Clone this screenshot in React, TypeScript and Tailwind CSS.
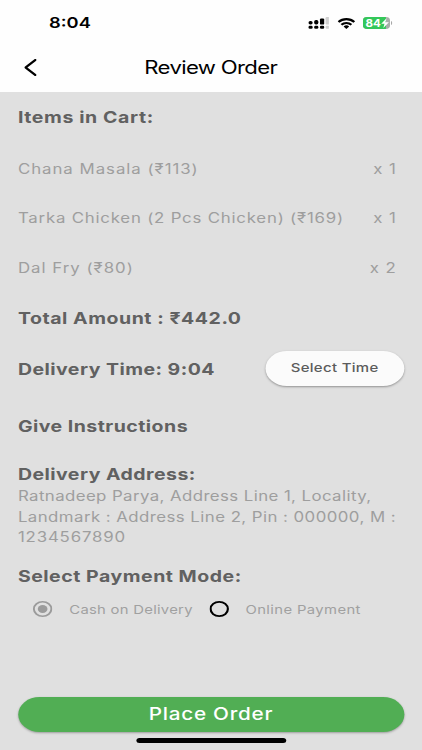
import type { ReactNode } from "react";

const items = [
  { name: "Chana Masala (₹113)", qty: "x 1", tracking: "tracking-[0.8px]" },
  { name: "Tarka Chicken (2 Pcs Chicken) (₹169)", qty: "x 1", tracking: "tracking-[0.65px]" },
  { name: "Dal Fry (₹80)", qty: "x 2", tracking: "tracking-[0.82px]" },
];

function Heading({ children, tracking = "tracking-[0.39px]" }: { children: ReactNode; tracking?: string }) {
  return (
    <h2 className={`whitespace-nowrap text-[16px] leading-[20px] font-bold text-[#616161] ${tracking}`}>
      {children}
    </h2>
  );
}

function StatusBar() {
  return (
    <div className="flex h-[46px] items-center pl-[40.3px] pr-[24.7px]">
      <span className="flex-1 text-[15px] leading-[20px] font-semibold text-black">8:04</span>
      <svg className="mr-[6.7px] h-[12px] w-[17.7px]" viewBox="0 0 21.5 12" preserveAspectRatio="none">
        <g fill="#000">
          <rect x="0.3" y="4" width="4.2" height="3.6" rx="1.8" />
          <rect x="6" y="3" width="4.2" height="4.6" rx="1.8" />
          <rect x="11.8" y="1.4" width="4.2" height="6.2" rx="1.2" />
          <rect x="0.3" y="8.8" width="4.2" height="3" rx="1.4" />
          <rect x="6" y="8.8" width="4.2" height="3" rx="1.4" />
          <rect x="11.8" y="8.8" width="4.2" height="3" rx="1.2" />
        </g>
        <g fill="#cfcfcf">
          <rect x="17.4" y="0" width="4" height="7.6" rx="1.2" />
          <rect x="17.4" y="8.8" width="4" height="3" rx="1.2" />
        </g>
      </svg>
      <svg className="mr-[6.6px] h-[11px] w-[14.8px]" viewBox="0 0 18 12" preserveAspectRatio="none">
        <path d="M1.1 4.4a11.4 11.4 0 0 1 15.8 0M4 7.4a7.2 7.2 0 0 1 10 0" fill="none" stroke="#000" strokeWidth="2.3" />
        <path d="M9 12 6.2 9.2a4 4 0 0 1 5.6 0z" fill="#000" />
      </svg>
      <svg className="h-[12px] w-[24px]" viewBox="0 0 24 12">
        <defs>
          <clipPath id="battery">
            <rect width="22.2" height="12" rx="3.4" />
          </clipPath>
        </defs>
        <g clipPath="url(#battery)">
          <rect width="22.2" height="12" fill="#a9aeaa" />
          <rect width="18.8" height="12" fill="#34c759" />
        </g>
        <path d="M23 4v4c1-.5 1.2-1.2 1.2-2s-.2-1.5-1.2-2z" fill="#a8a8a8" />
        <text x="2" y="9.8" fontSize="10.4" fontWeight="700" fill="#fff" textLength="12.6" lengthAdjust="spacingAndGlyphs">84</text>
        <path d="M19.4 1.3l-4.400 5.400h2.700l-1 4.200 4.600-5.600h-2.900z" fill="#fff" />
      </svg>
    </div>
  );
}

function Radio({ checked }: { checked?: boolean }) {
  return checked ? (
    <svg className="size-[16px]" viewBox="0 0 16 16">
      <circle cx="8" cy="8" r="7.2" fill="none" stroke="#9b9b9b" strokeWidth="1.6" />
      <circle cx="8" cy="8" r="4" fill="#9b9b9b" />
    </svg>
  ) : (
    <svg className="size-[16px]" viewBox="0 0 16 16">
      <circle cx="8" cy="8" r="7.1" fill="none" stroke="#000" strokeWidth="1.8" />
    </svg>
  );
}

export default function App() {
  return (
    <div className="h-[750px] w-[422px] overflow-hidden">
      <div className="flex h-[750px] w-[347px] origin-top-left scale-x-[1.218] flex-col bg-[#e0e0e0] font-['Inter','Noto_Sans',sans-serif]">
        <header className="h-[92px] shrink-0 bg-[#fefefe]">
          <StatusBar />
          <div className="flex h-[42px] items-center pl-[20px]">
            <svg className="h-[17px] w-[10px]" viewBox="0 0 10 17">
              <path d="M9 1 1 8.5l8 7.5" fill="none" stroke="#000" strokeWidth="2.1" strokeLinecap="round" strokeLinejoin="round" />
            </svg>
            <h1 className="ml-[88.5px] whitespace-nowrap text-[18.2px] leading-[24px] tracking-[-0.55px] text-black">Review Order</h1>
          </div>
        </header>

        <main className="flex flex-1 flex-col pt-[15px] pr-[15.2px] pl-[14.7px]">
          <Heading tracking="tracking-[0.5px]">Items in Cart:</Heading>
          <ul className="mt-[17px]">
            {items.map((item) => (
              <li
                key={item.name}
                className="flex h-[49.8px] items-center justify-between whitespace-nowrap pr-[6px] text-[13.8px] text-[#9e9e9e]"
              >
                <span className={item.tracking}>{item.name}</span>
                <span className="tracking-[0.8px]">{item.qty}</span>
              </li>
            ))}
          </ul>
          <div className="mt-[14.6px]">
            <Heading tracking="tracking-[0.45px]">Total Amount : ₹442.0</Heading>
          </div>
          <div className="mt-[22.6px] flex h-[36px] items-center justify-between">
            <Heading>Delivery Time: 9:04</Heading>
            <button className="h-[35px] w-[114.2px] rounded-full bg-[#fbfbfb] text-[12.3px] font-medium tracking-[0.26px] text-[#5c5c5c] shadow-[0_1px_2px_rgba(0,0,0,0.35)]">
              Select Time
            </button>
          </div>
          <div className="mt-[29.4px]">
            <Heading>Give Instructions</Heading>
          </div>
          <div className="mt-[28px]">
            <Heading>Delivery Address:</Heading>
          </div>
          <p className="mt-[2.3px] whitespace-nowrap text-[13.8px] leading-[20.4px] text-[#9e9e9e]">
            <span className="tracking-[0.34px]">Ratnadeep Parya, Address Line 1, Locality,</span>
            <br />
            <span className="tracking-[0.37px]">Landmark : Address Line 2, Pin : 000000, M :</span>
            <br />
            <span className="tracking-[0.7px]">1234567890</span>
          </p>
          <div className="mt-[18.5px]">
            <Heading tracking="tracking-[0.43px]">Select Payment Mode:</Heading>
          </div>
          <div className="mt-[15.5px] flex h-[16px] items-center whitespace-nowrap pl-[12.7px] text-[12.2px] text-[#a0a0a0]">
            <Radio checked />
            <span className="ml-[13.5px] w-[102px] pt-px tracking-[0.22px]">Cash on Delivery</span>
            <span className="ml-[13.2px] flex">
              <Radio />
            </span>
            <span className="ml-[13.5px] pt-px tracking-[0.3px]">Online Payment</span>
          </div>
          <button className="mt-auto h-[35.5px] w-full shrink-0 rounded-full bg-[#51ae54] text-[17px] font-medium tracking-[0.6px] text-white shadow-[0_1px_2px_rgba(0,0,0,0.3)]">
            Place Order
          </button>
          <div className="mt-[6px] mb-[7.5px] h-[4.5px] w-[123px] shrink-0 self-center rounded-full bg-black" />
        </main>
      </div>
    </div>
  );
}
